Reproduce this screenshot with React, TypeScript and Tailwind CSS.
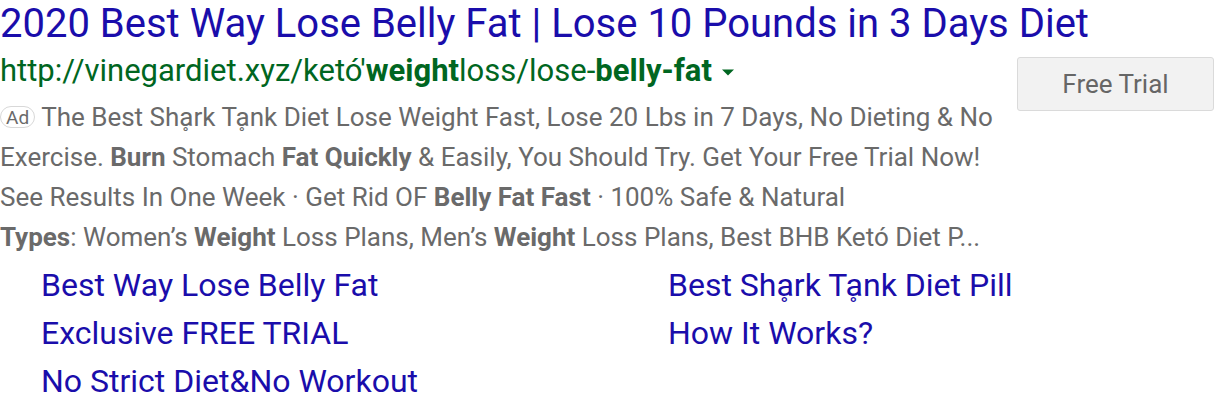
import React from "react";

const desc = "text-[#6a6a6a]";

export default function App() {
  return (
    <div className="w-[1216px] h-[410px] bg-white overflow-hidden font-['Roboto',sans-serif] relative">
      <div className="text-[40px] leading-[48px] text-[#1a0dab] whitespace-nowrap">
        2020 Best Way Lose Belly Fat | Lose 10 Pounds in 3 Days Diet
      </div>
      <div className="flex items-start">
        <div className="flex-1">
          <div className="flex items-center text-[31px] leading-[46px] text-[#006621] whitespace-nowrap">
            <span>
              http://vinegardiet.xyz/ketó'<b className="font-bold">weight</b>loss/lose-<b className="font-bold">belly-fat</b>
            </span>
            <svg className="ml-[10px] mt-[2px]" width="12" height="7" viewBox="0 0 12 7">
              <path d="M0 0.5 L12 0.5 L6 6.5 Z" fill="#006621" />
            </svg>
          </div>
          <div className={`mt-[3px] text-[26px] leading-[40px] ${desc} whitespace-nowrap`}>
            <div className="flex items-center">
              <span className="inline-flex items-center justify-center h-[22px] px-[5px] mr-[6px] rounded-[11px] border border-[#d8d8d8] text-[19px] leading-none text-[#6a6a6a]">
                Ad
              </span>
              <span>The Best Sh{"\u1E01"}rk T{"\u1E01"}nk Diet Lose Weight Fast, Lose 20 Lbs in 7 Days, No Dieting &amp; No</span>
            </div>
            <div>
              Exercise. <b className="font-bold">Burn</b> Stomach <b className="font-bold">Fat Quickly</b> &amp; Easily, You Should Try. Get Your Free Trial Now!
            </div>
            <div>
              See Results In One Week · Get Rid OF <b className="font-bold">Belly Fat Fast</b> · 100% Safe &amp; Natural
            </div>
            <div>
              <b className="font-bold">Types</b>: Women’s <b className="font-bold">Weight</b> Loss Plans, Men’s <b className="font-bold">Weight</b> Loss Plans, Best BHB Ketó Diet P...
            </div>
          </div>
        </div>
        <div className="pt-[9px] pr-[2px]">
          <div className="w-[197px] h-[54px] flex items-center justify-center bg-[#f2f2f2] border border-[#dadada] rounded-[3px] text-[26px] text-[#666666]">
            Free Trial
          </div>
        </div>
      </div>
      <div className="mt-[4px] grid grid-cols-[627px_1fr] pl-[41px] text-[32px] leading-[48px] text-[#1a0dab] whitespace-nowrap">
        <div>Best Way Lose Belly Fat</div>
        <div>Best Sh{"\u1E01"}rk T{"\u1E01"}nk Diet Pill</div>
        <div>Exclusive FREE TRIAL</div>
        <div>How It Works?</div>
        <div>No Strict Diet&amp;No Workout</div>
      </div>
    </div>
  );
}
